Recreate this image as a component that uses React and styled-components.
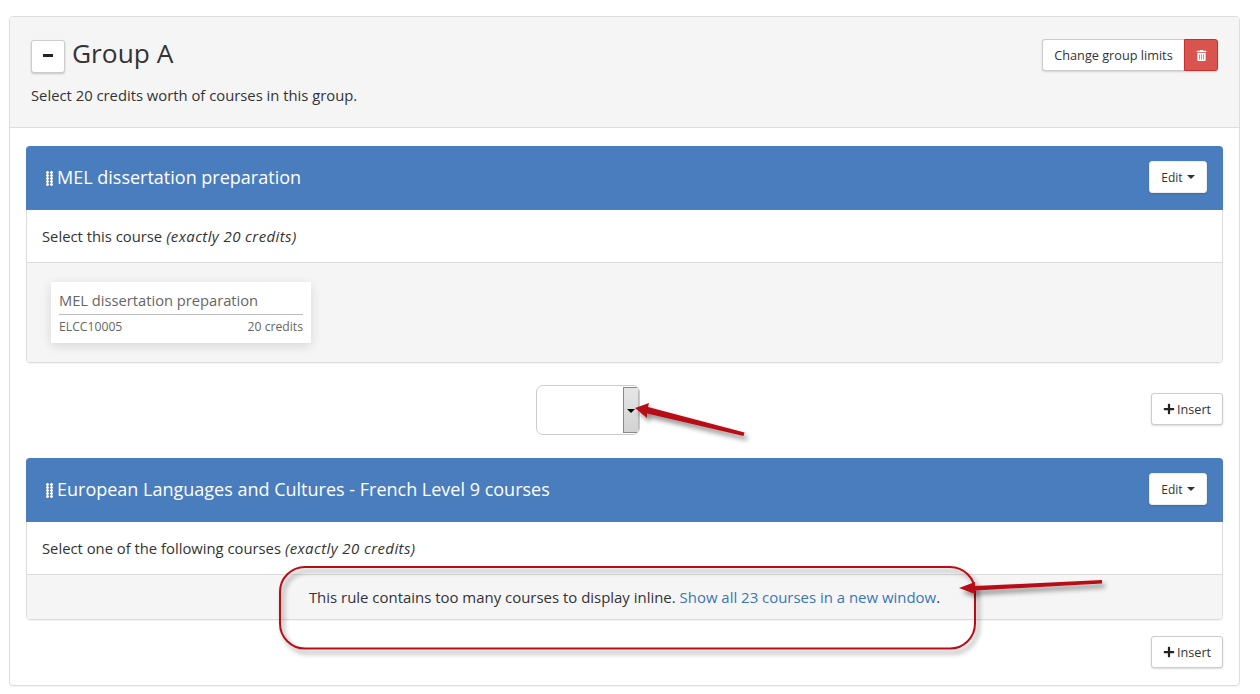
import React from "react";
import styled, { createGlobalStyle } from "styled-components";
import { FaPlus, FaTrashAlt } from "react-icons/fa";

const GlobalStyle = createGlobalStyle`
  html, body {
    margin: 0;
    padding: 0;
    background: #fff;
  }
  body {
    font-family: "Open Sans", "Liberation Sans", sans-serif;
    font-size: 14px;
    color: #333;
  }
`;

const Page = styled.div`
  position: relative;
  width: 1260px;
  height: 694px;
  overflow: hidden;
  padding: 16px 20px 0 9px;
  box-sizing: border-box;
`;

const GroupPanel = styled.div`
  height: 670px;
  box-sizing: border-box;
  border: 1px solid #ddd;
  border-radius: 4px;
  box-shadow: 0 1px 1px rgba(0, 0, 0, 0.05);
  overflow: hidden;
`;

const GroupHeading = styled.div`
  height: 111px;
  box-sizing: border-box;
  background: #f5f5f5;
  border-bottom: 1px solid #ddd;
  padding: 23px 21px 0 21px;
  display: flex;
  justify-content: space-between;
  align-items: flex-start;
`;

const TitleRow = styled.div`
  display: flex;
  align-items: center;
  gap: 7px;
  height: 33px;
`;

const CollapseButton = styled.button`
  width: 34px;
  height: 33px;
  padding: 0;
  background: #fff;
  border: 1px solid #ccc;
  border-radius: 3px;
  box-shadow: 0 1px 2px rgba(0, 0, 0, 0.2);
  display: flex;
  align-items: center;
  justify-content: center;
  &::before {
    content: "";
    width: 10px;
    height: 3px;
    margin-top: -2px;
    background: #222;
  }
`;

const Title = styled.h2`
  margin: -8px 0 0;
  font-size: 26.3px;
  font-weight: 400;
  color: #333;
`;

const Subtitle = styled.p`
  margin: 12px 0 0;
  font-size: 14.8px;
  line-height: 20px;
`;

const ButtonGroup = styled.div`
  display: flex;
  margin-top: -1px;
`;

const Button = styled.button`
  height: 32px;
  box-sizing: border-box;
  padding: 0 11px;
  background: #fff;
  border: 1px solid #ccc;
  border-radius: 3px;
  box-shadow: 0 1px 2px rgba(0, 0, 0, 0.15);
  font-family: inherit;
  font-size: 12px;
  color: #333;
  display: inline-flex;
  align-items: center;
  gap: 3px;
  white-space: nowrap;
`;

const LimitsButton = styled(Button)`
  width: 142px;
  padding: 0;
  justify-content: center;
  font-size: 12.7px;
  border-radius: 3px 0 0 3px;
  border-right: 0;
`;

const DeleteButton = styled(Button)`
  width: 34px;
  justify-content: center;
  padding: 0;
  background: #d9534f;
  border-color: #c9302c;
  border-radius: 0 3px 3px 0;
  color: #fff;
  font-size: 11px;
`;

const InsertButton = styled(Button)`
  width: 72px;
  padding: 0;
  justify-content: center;
  gap: 2px;
  font-size: 12.7px;
  svg {
    font-size: 12px;
    color: #222;
  }
`;

const GroupBody = styled.div`
  padding: 18px 16px 0;
`;

const RulePanel = styled.div`
  border: 1px solid #ddd;
  border-radius: 4px;
  box-shadow: 0 1px 1px rgba(0, 0, 0, 0.05);
`;

const RuleHeading = styled.div`
  height: 64px;
  margin: -1px -1px 0;
  box-sizing: border-box;
  padding: 0 16px 2px 20px;
  border-radius: 4px 4px 0 0;
  background: #4a7dbd;
  color: #fff;
  display: flex;
  align-items: center;
  justify-content: space-between;
`;

const RuleTitle = styled.div`
  display: flex;
  align-items: center;
  gap: 4px;
  font-size: 18px;
`;

const Grip = styled.span`
  width: 7px;
  height: 15px;
  margin-top: 3px;
  background-image: radial-gradient(circle at 1.5px 1.5px, #fff 1.3px, transparent 1.5px);
  background-size: 4px 3px;
`;

const EditButton = styled(Button)`
  width: 58px;
  padding: 0;
  justify-content: center;
  border-color: #eee;
  gap: 4px;
`;

const Caret = styled.span`
  width: 0;
  height: 0;
  border-left: 4px solid transparent;
  border-right: 4px solid transparent;
  border-top: 4px solid #333;
`;

const RuleDescription = styled.div`
  height: 52px;
  box-sizing: border-box;
  padding: 0 15px 1px;
  display: flex;
  align-items: center;
  gap: 4px;
  font-size: 14.8px;
  em {
    font-style: italic;
    font-size: 15px;
    letter-spacing: 0.4px;
  }
`;

const RuleFooter = styled.div`
  background: #f5f5f5;
  border-top: 1px solid #ddd;
  border-radius: 0 0 3px 3px;
  height: ${(p) => p.$height}px;
  box-sizing: border-box;
  ${(p) => p.$centered && "display: flex; align-items: center; justify-content: center;"}
  ${(p) => p.$padded && "padding: 19px 24px;"}
`;

const CourseCard = styled.div`
  width: 260px;
  height: 61px;
  box-sizing: border-box;
  padding: 8px 8px 0;
  background: #fff;
  box-shadow: 0 3px 10px rgba(0, 0, 0, 0.12);
  color: #666;
`;

const CourseName = styled.div`
  font-size: 14.7px;
  line-height: 20px;
  padding-bottom: 4px;
  border-bottom: 1px solid #bbb;
`;

const CourseMeta = styled.div`
  display: flex;
  justify-content: space-between;
  font-size: 12.2px;
  line-height: 15px;
  margin-top: 4px;
`;

const InsertRow = styled.div`
  height: ${(p) => p.$height}px;
  box-sizing: border-box;
  display: flex;
  align-items: flex-start;
  justify-content: flex-end;
  padding-top: ${(p) => p.$top}px;
`;

const SelectBox = styled.div`
  width: 104px;
  height: 50px;
  box-sizing: border-box;
  margin: -8px auto 0 510px;
  border: 1px solid #ccc;
  border-radius: 7px;
  background: #fff;
  display: flex;
  justify-content: flex-end;
  overflow: hidden;
`;

const Spinner = styled.div`
  width: 16px;
  margin: 1px 0 1px;
  border: 1px solid #8a8a8a;
  border-right-color: #bbb;
  background: linear-gradient(180deg, #e6e6e6, #d2d2d2);
  display: flex;
  align-items: center;
  justify-content: center;
  box-sizing: border-box;
  span {
    width: 0;
    height: 0;
    margin-top: 2px;
    border-left: 4px solid transparent;
    border-right: 4px solid transparent;
    border-top: 4px solid #000;
  }
`;

const Notice = styled.span`
  font-size: 14.95px;
  a {
    color: #3a75b4;
    text-decoration: none;
  }
`;

const Annotations = styled.svg`
  position: absolute;
  top: 0;
  left: 0;
  pointer-events: none;
`;

const Rule = ({ title, description, credits, footer }) => (
  <RulePanel>
    <RuleHeading>
      <RuleTitle>
        <Grip />
        {title}
      </RuleTitle>
      <EditButton>
        Edit <Caret />
      </EditButton>
    </RuleHeading>
    <RuleDescription>
      {description} <em>(exactly {credits} credits)</em>
    </RuleDescription>
    {footer}
  </RulePanel>
);

const App = () => (
  <Page>
    <GlobalStyle />
    <GroupPanel>
      <GroupHeading>
        <div>
          <TitleRow>
            <CollapseButton aria-label="Collapse" />
            <Title>Group A</Title>
          </TitleRow>
          <Subtitle>Select 20 credits worth of courses in this group.</Subtitle>
        </div>
        <ButtonGroup>
          <LimitsButton>Change group limits</LimitsButton>
          <DeleteButton>
            <FaTrashAlt />
          </DeleteButton>
        </ButtonGroup>
      </GroupHeading>
      <GroupBody>
        <Rule
          title="MEL dissertation preparation"
          description="Select this course"
          credits={20}
          footer={
            <RuleFooter $height={100} $padded>
              <CourseCard>
                <CourseName>MEL dissertation preparation</CourseName>
                <CourseMeta>
                  <span>ELCC10005</span>
                  <span>20 credits</span>
                </CourseMeta>
              </CourseCard>
            </RuleFooter>
          }
        />
        <InsertRow $height={95} $top={30}>
          <SelectBox>
            <Spinner>
              <span />
            </Spinner>
          </SelectBox>
          <InsertButton>
            <FaPlus /> Insert
          </InsertButton>
        </InsertRow>
        <Rule
          title="European Languages and Cultures - French Level 9 courses"
          description="Select one of the following courses"
          credits={20}
          footer={
            <RuleFooter $height={45} $centered>
              <Notice>
                This rule contains too many courses to display inline.{" "}
                <a href="#all">Show all 23 courses in a new window</a>.
              </Notice>
            </RuleFooter>
          }
        />
        <InsertRow $height={60} $top={16}>
          <InsertButton>
            <FaPlus /> Insert
          </InsertButton>
        </InsertRow>
      </GroupBody>
    </GroupPanel>
    {/* red markup drawn over the screenshot */}
    <Annotations width="1260" height="694" viewBox="0 0 1260 694">
      <defs>
        <filter id="markShadow" x="-20%" y="-40%" width="140%" height="180%">
          <feDropShadow dx="3" dy="4" stdDeviation="2.5" floodColor="#000" floodOpacity="0.45" />
        </filter>
      </defs>
      <g filter="url(#markShadow)">
        <rect x="280" y="567" width="695" height="81.5" rx="25" fill="none" stroke="#b70f16" strokeWidth="2" />
      </g>
      <g filter="url(#markShadow)" fill="#b70f16">
        <path d="M635 408 L649 403 L648 407 L744.5 432.5 L743.5 436 L647 413.5 L647 418 Z" />
        <path d="M959 588 L975 582 L975 586 L1102 580 L1102 583.5 L975 590.5 L975 594 Z" />
      </g>
    </Annotations>
  </Page>
);

export default App;
